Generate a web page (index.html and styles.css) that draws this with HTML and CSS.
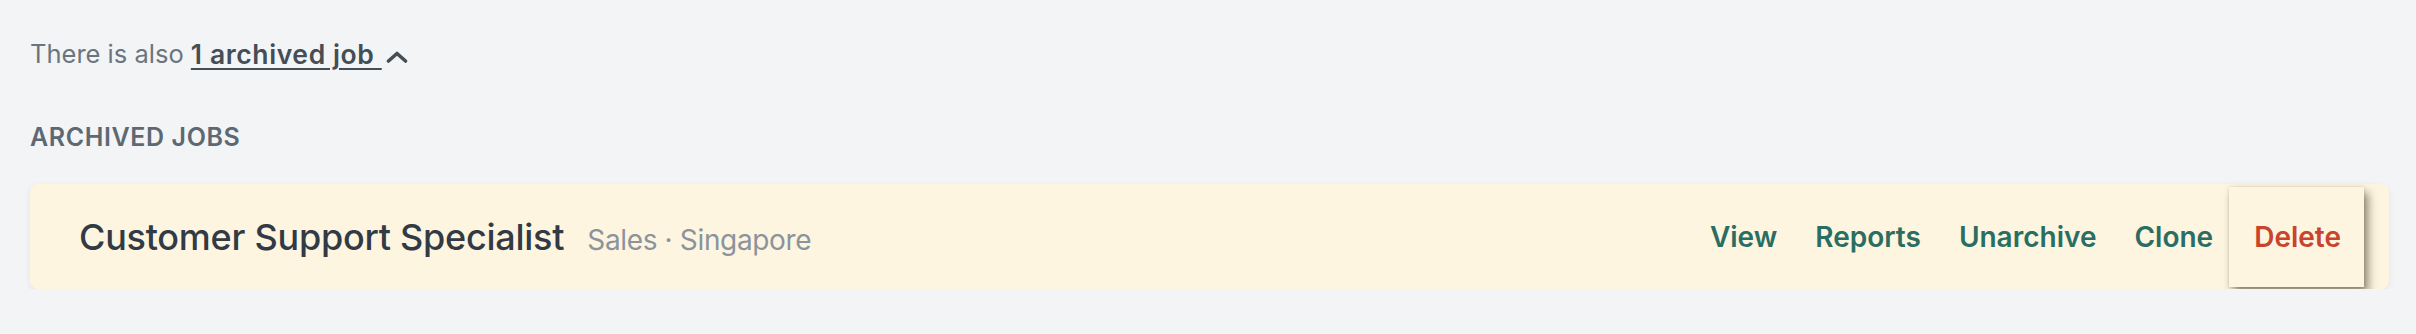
FILE: index.html
```html
<!DOCTYPE html>
<html lang="en">
<head>
<meta charset="utf-8">
<title>Archived jobs</title>
<link rel="stylesheet" href="styles.css">
</head>
<body>
<main class="page">
  <p class="notice"><span>There is also </span><a class="notice-link" href="#">1 archived job </a><svg class="chevron" viewBox="0 0 22 12" aria-hidden="true"><path d="M2.5 10 L11 2.5 L19.5 10" /></svg></p>
  <h2 class="section-title">ARCHIVED JOBS</h2>
  <div class="job-card">
    <div class="job-info">
      <span class="job-title">Customer Support Specialist</span>
      <span class="job-meta">Sales · Singapore</span>
    </div>
    <nav class="job-actions">
      <a class="action" href="#">View</a>
      <a class="action" href="#">Reports</a>
      <a class="action" href="#">Unarchive</a>
      <a class="action" href="#">Clone</a>
      <a class="action action-danger" href="#">Delete</a>
    </nav>
  </div>
</main>
</body>
</html>
```

FILE: styles.css
```css
* { box-sizing: border-box; }

html, body {
  margin: 0;
  background: #f3f4f6;
}

body {
  font-family: Inter, "Noto Sans", "Liberation Sans", sans-serif;
}

.page {
  padding: 34px 27px 0 30px;
}

.notice {
  margin: 0;
  font-size: 25.5px;
  line-height: 40px;
  color: #6b7580;
  display: flex;
  align-items: center;
  white-space: pre;
}

.notice-link {
  font-size: 26.5px;
  color: #454d55;
  font-weight: 600;
  letter-spacing: 0.6px;
  text-decoration: underline;
  text-decoration-thickness: 2px;
  text-underline-offset: 4px;
}

.chevron {
  width: 22px;
  height: 12px;
  margin-left: 4px;
  margin-top: 6px;
  fill: none;
  stroke: #454d55;
  stroke-width: 3.6;
  stroke-linecap: round;
  stroke-linejoin: round;
}

.section-title {
  margin: 48px 0 0 0;
  font-size: 25px;
  line-height: 30px;
  font-weight: 600;
  letter-spacing: 0.6px;
  color: #5d6872;
}

.job-card {
  margin-top: 32px;
  height: 105px;
  padding: 3px 25px 2px 49px;
  background: #fef5e1;
  border-radius: 8px;
  box-shadow: 0 2px 6px rgba(0, 0, 0, 0.07);
  display: flex;
  align-items: center;
  justify-content: space-between;
}

.job-info {
  display: flex;
  align-items: baseline;
  gap: 23px;
}

.job-title {
  font-size: 36px;
  line-height: 44px;
  font-weight: 500;
  letter-spacing: -0.25px;
  color: #313a45;
}

.job-meta {
  font-size: 28px;
  line-height: 34px;
  letter-spacing: -0.35px;
  color: #8b939c;
}

.job-actions {
  display: flex;
  align-items: stretch;
  height: 100px;
}

.action {
  display: flex;
  align-items: center;
  padding: 0 19px;
  font-size: 28px;
  line-height: 34px;
  font-weight: 600;
  color: #2a6e63;
  text-decoration: none;
}

.action-danger {
  color: #c8442c;
  padding: 0 23px 0 25px;
  margin-left: -3px;
  background: #fef5e1;
  box-shadow: 4px 6px 9px rgba(50, 40, 20, 0.55), 0 0 3px rgba(50, 40, 20, 0.15);
}
```
